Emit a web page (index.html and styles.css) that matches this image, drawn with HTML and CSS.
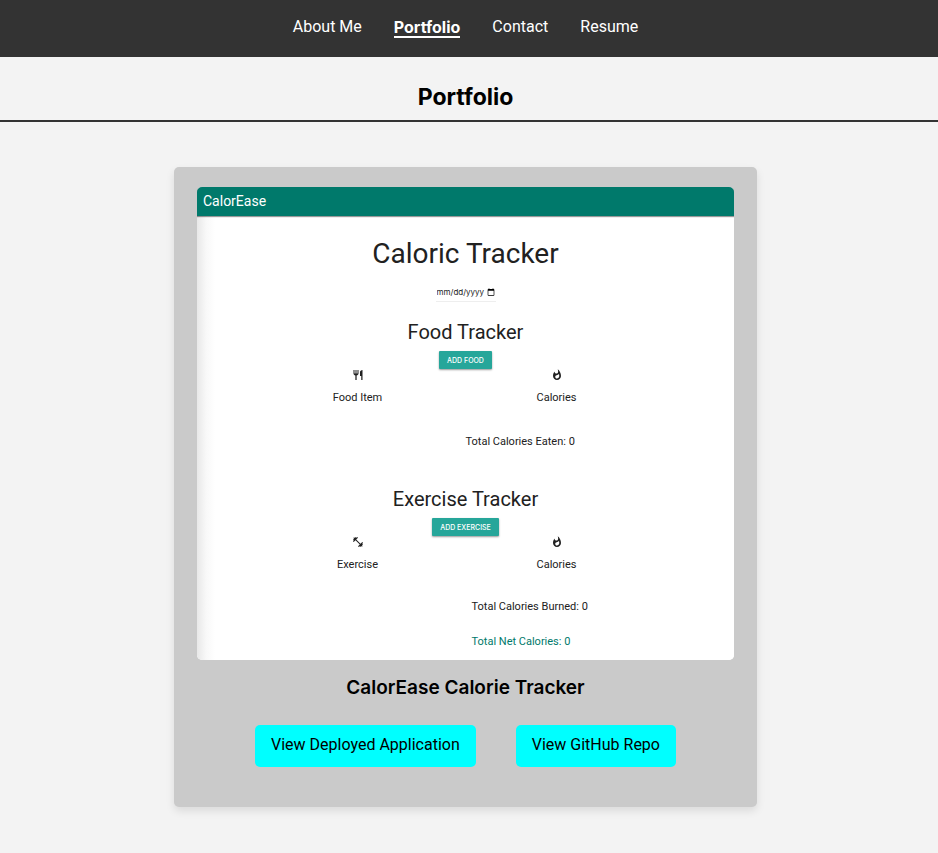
FILE: index.html
```html
<!DOCTYPE html>
<html lang="en">
<head>
<meta charset="utf-8">
<meta name="viewport" content="width=device-width, initial-scale=1">
<title>Portfolio</title>
<link rel="stylesheet" href="styles.css">
</head>
<body>
<header class="site-header">
  <nav class="nav">
    <a class="nav-link" href="#about">About Me</a>
    <a class="nav-link active" href="#portfolio">Portfolio</a>
    <a class="nav-link" href="#contact">Contact</a>
    <a class="nav-link" href="#resume">Resume</a>
  </nav>
</header>
<main>
  <h1 class="page-title">Portfolio</h1>
  <section class="projects">
    <article class="card">
      <div class="preview">
        <div class="app-bar">CalorEase</div>
        <div class="app-body">
          <h2 class="app-title">Caloric Tracker</h2>
          <input class="date" type="date" aria-label="Date">
          <section class="tracker">
            <h3 class="tracker-title">Food Tracker</h3>
            <button class="add" type="button">ADD FOOD</button>
            <div class="columns">
              <div class="column">
                <svg class="icon" viewBox="0 0 24 24"><path d="M11 9H9V2H7v7H5V2H3v7c0 2.12 1.66 3.84 3.75 3.97V22h2.5v-9.03C11.34 12.84 13 11.12 13 9V2h-2v7zm5-3v8h2.5v8H21V2c-2.76 0-5 2.24-5 4z"/></svg>
                <span>Food Item</span>
              </div>
              <div class="column">
                <svg class="icon" viewBox="0 0 24 24"><path d="M13.5.67s.74 2.65.74 4.8c0 2.06-1.35 3.73-3.41 3.73-2.07 0-3.63-1.67-3.63-3.73l.03-.36C5.21 7.51 4 10.62 4 14c0 4.42 3.58 8 8 8s8-3.58 8-8C20 8.61 17.41 3.8 13.5.67zM11.71 19c-1.78 0-3.22-1.4-3.22-3.14 0-1.62 1.05-2.76 2.81-3.12 1.77-.36 3.6-1.21 4.62-2.58.39 1.29.59 2.65.59 4.04 0 2.65-2.15 4.8-4.8 4.8z"/></svg>
                <span>Calories</span>
              </div>
            </div>
            <p class="total">Total Calories Eaten: 0</p>
          </section>
          <section class="tracker">
            <h3 class="tracker-title">Exercise Tracker</h3>
            <button class="add" type="button">ADD EXERCISE</button>
            <div class="columns">
              <div class="column">
                <svg class="icon" viewBox="0 0 24 24"><path d="M20.57 14.86L22 13.43 20.57 12 17 15.57 8.43 7 12 3.43 10.57 2 9.14 3.43 7.71 2 5.57 4.14 4.14 2.71 2.71 4.14l1.43 1.43L2 7.71l1.43 1.43L2 10.57 3.43 12 7 8.43 15.57 17 12 20.57 13.43 22l1.43-1.43L16.29 22l2.14-2.14 1.43 1.43 1.43-1.43-1.43-1.43L22 16.29z"/></svg>
                <span>Exercise</span>
              </div>
              <div class="column">
                <svg class="icon" viewBox="0 0 24 24"><path d="M13.5.67s.74 2.65.74 4.8c0 2.06-1.35 3.73-3.41 3.73-2.07 0-3.63-1.67-3.63-3.73l.03-.36C5.21 7.51 4 10.62 4 14c0 4.42 3.58 8 8 8s8-3.58 8-8C20 8.61 17.41 3.8 13.5.67zM11.71 19c-1.78 0-3.22-1.4-3.22-3.14 0-1.62 1.05-2.76 2.81-3.12 1.77-.36 3.6-1.21 4.62-2.58.39 1.29.59 2.65.59 4.04 0 2.65-2.15 4.8-4.8 4.8z"/></svg>
                <span>Calories</span>
              </div>
            </div>
            <div class="totals">
              <p class="total">Total Calories Burned: 0</p>
              <p class="total net">Total Net Calories: 0</p>
            </div>
          </section>
        </div>
      </div>
      <h2 class="card-title">CalorEase Calorie Tracker</h2>
      <div class="actions">
        <a class="action" href="#deployed">View Deployed Application</a>
        <a class="action" href="#repo">View GitHub Repo</a>
      </div>
    </article>
  </section>
</main>
</body>
</html>
```
FILE: styles.css
```css
* {
  box-sizing: border-box;
}

body {
  margin: 0;
  background: #f3f3f3;
  color: #000;
  font-family: Roboto, "Liberation Sans", sans-serif;
  font-size: 16px;
}

h1, h2, h3, p {
  margin: 0;
}

.site-header {
  background: #333;
  padding: 18px 7px 19px 0;
}

.nav {
  display: flex;
  justify-content: center;
  gap: 32px;
}

.nav-link {
  color: #fff;
  line-height: 18px;
  text-decoration: none;
  border-bottom: 2px solid transparent;
}

.nav-link.active {
  border-bottom-color: #fff;
  font-family: Inter, sans-serif;
  font-weight: 700;
}

.page-title {
  padding: 24px 7px 7px 0;
  border-bottom: 2px solid #333;
  font-family: Inter, sans-serif;
  font-size: 23px;
  line-height: 32px;
  text-align: center;
}

.projects {
  display: flex;
  justify-content: center;
  padding: 45px 7px 46px 0;
}

.card {
  flex: 0 1 583px;
  padding: 20px 23px 40px;
  background: #cacaca;
  border-radius: 5px;
  box-shadow: 0 4px 8px rgba(0, 0, 0, 0.1);
  text-align: center;
}

.preview {
  overflow: hidden;
  background: #fff;
  border-radius: 5px;
  color: #212121;
  text-align: left;
}

.app-bar {
  position: relative;
  padding: 0 6px;
  background: #00796b;
  box-shadow: 0 1px 1px rgba(0, 0, 0, 0.4);
  color: #fff;
  font-size: 14px;
  line-height: 29px;
}

.app-body {
  display: flex;
  flex-direction: column;
  align-items: center;
  padding: 18px 0 6px;
  background: linear-gradient(to right, #e8e8e8, #f8f8f8 9px, #fff 18px);
}

.app-title {
  font-size: 28px;
  font-weight: 400;
  line-height: 40px;
}

.date {
  width: 60px;
  height: 18px;
  margin: 10px 0 18px;
  padding: 0 1px 2px;
  border: 0;
  border-bottom: 1px solid #eee;
  background: transparent;
  color: #212121;
  font-family: Inter, sans-serif;
  font-size: 8px;
}

.date::-webkit-datetime-edit,
.date::-webkit-datetime-edit-fields-wrapper,
.date::-webkit-datetime-edit-month-field,
.date::-webkit-datetime-edit-day-field,
.date::-webkit-datetime-edit-year-field {
  padding: 0;
}

.date::-webkit-calendar-picker-indicator {
  width: 8px;
  height: 8px;
  margin: 0;
  padding: 0;
}

.tracker {
  align-self: stretch;
  display: flex;
  flex-direction: column;
  align-items: center;
  height: 167px;
}

.tracker-title {
  font-size: 20px;
  font-weight: 400;
  line-height: 24px;
}

.add {
  height: 18px;
  margin: 7px 0 0;
  padding: 0 8px;
  border: 0;
  border-radius: 1px;
  background: #26a69a;
  box-shadow: 0 1px 2px rgba(0, 0, 0, 0.4);
  color: #fff;
  font-family: Inter, sans-serif;
  font-size: 7px;
  font-weight: 500;
}

.columns {
  align-self: stretch;
  display: grid;
  grid-template-columns: 1fr 1fr;
  padding: 0 78px 0 61px;
}

.column {
  display: flex;
  flex-direction: column;
  align-items: center;
  gap: 9px;
  font-size: 11px;
  line-height: 16px;
}

.icon {
  width: 12px;
  height: 12px;
  fill: #212121;
}

.total {
  align-self: stretch;
  margin-top: 28px;
  padding-left: 50%;
  font-size: 11px;
  line-height: 16px;
}

.totals {
  align-self: stretch;
  padding-left: 12px;
}

.totals .total {
  margin-top: 26px;
}

.totals .total.net {
  margin-top: 19px;
  color: #00796b;
}

.card-title {
  margin-top: 16px;
  font-family: Inter, sans-serif;
  font-size: 19px;
  font-weight: 600;
  line-height: 24px;
}

.actions {
  display: flex;
  flex-wrap: wrap;
  justify-content: center;
  gap: 40px;
  margin-top: 25px;
}

.action {
  padding: 10px 16px 12px;
  background: #0ff;
  border-radius: 5px;
  color: #000;
  line-height: 20px;
  text-decoration: none;
}
```
